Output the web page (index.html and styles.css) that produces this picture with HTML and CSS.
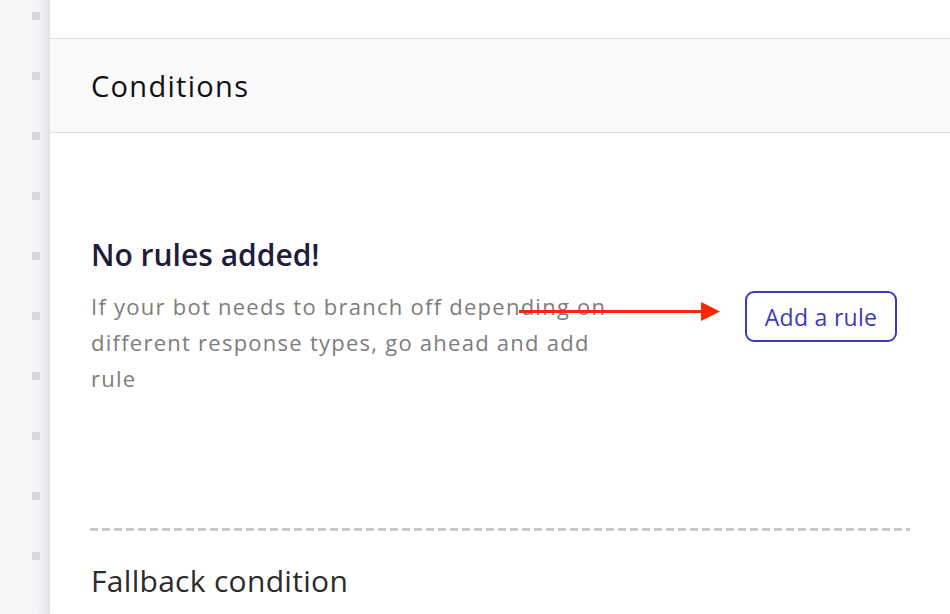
FILE: index.html
```html
<!DOCTYPE html>
<html lang="en">
<head>
  <meta charset="UTF-8">
  <title>Conditions</title>
  <link rel="stylesheet" href="styles.css">
</head>
<body>
  <div class="rail">
    <span class="dot"></span><span class="dot"></span><span class="dot"></span>
    <span class="dot"></span><span class="dot"></span><span class="dot"></span>
    <span class="dot"></span><span class="dot"></span><span class="dot"></span>
    <span class="dot"></span>
  </div>

  <div class="panel">
    <div class="panel-top"></div>
    <div class="panel-header">Conditions</div>

    <div class="panel-body">
      <div class="empty">
        <div class="empty-text">
          <h3>No rules added!</h3>
          <p>If your bot needs to branch off depending on different response types, go ahead and add rule</p>
        </div>
        <button class="add-rule">Add a rule</button>
        <!-- annotation arrow -->
        <svg class="arrow" width="202" height="24" viewBox="0 0 202 24">
          <rect x="0" y="10" width="184" height="3" fill="#ff2600"/>
          <polygon points="182,2 201,11.5 182,21" fill="#ff2600"/>
        </svg>
      </div>

      <div class="divider"></div>
      <div class="fallback">Fallback condition</div>
    </div>
  </div>
</body>
</html>
```

FILE: styles.css
```css
/* Basic Style */
body {
  margin: 0;
  height: 614px;
  overflow: hidden;
  display: flex;
  background: #fff;
  font-family: 'Open Sans', sans-serif;
}
/* Left rail */
.rail {
  width: 50px;
  flex-shrink: 0;
  background: linear-gradient(to right, #f5f6f8 0, #f4f5f7 36px, #e9eaee 46px, #dfe0e4 50px);
  display: flex;
  flex-direction: column;
  align-items: flex-end;
  padding: 12px 10px 0 0;
  box-sizing: border-box;
  gap: 52px;
}
.dot {
  width: 8px;
  height: 8px;
  background: #d5d6de;
}
/* Panel */
.panel {
  flex: 1;
}
.panel-top {
  height: 38px;
}
.panel-header {
  height: 93px;
  line-height: 93px;
  padding-left: 41px;
  background: #fafafa;
  border-top: 1px solid #dcdcdc;
  border-bottom: 1px solid #dcdcdc;
  font-size: 29px;
  color: #111;
  letter-spacing: 1.3px;
}
.panel-body {
  padding: 0 40px 0 40px;
}
/* Empty state */
.empty {
  position: relative;
  display: flex;
  align-items: flex-start;
  padding: 104px 0 0 1px;
  height: 290px;
  box-sizing: border-box;
}
.empty-text {
  width: 530px;
  flex-shrink: 0;
}
.empty h3 {
  margin: 0 0 15px;
  font-size: 30px;
  font-weight: 600;
  color: #201d3b;
  line-height: 36px;
}
.empty p {
  margin: 0;
  font-size: 22px;
  line-height: 36px;
  letter-spacing: 1.25px;
  color: #7d7d7d;
}
.add-rule {
  margin: 54px 0 0 124px;
  width: 152px;
  height: 51px;
  border: 2px solid #3b3bb8;
  border-radius: 9px;
  background: #fff;
  color: #3b3bb8;
  font-family: 'Open Sans', sans-serif;
  font-size: 23px;
  letter-spacing: 0.3px;
  cursor: pointer;
}
.arrow {
  position: absolute;
  left: 429px;
  top: 167px;
}
/* Fallback */
.divider {
  height: 3px;
  margin-top: 105px;
  background: repeating-linear-gradient(to right, #c9c9c9 0, #c9c9c9 8px, transparent 8px, transparent 12px);
}
.fallback {
  padding: 29px 0 0 1px;
  font-size: 30px;
  letter-spacing: 0.3px;
  color: #2b2b2b;
}
```
